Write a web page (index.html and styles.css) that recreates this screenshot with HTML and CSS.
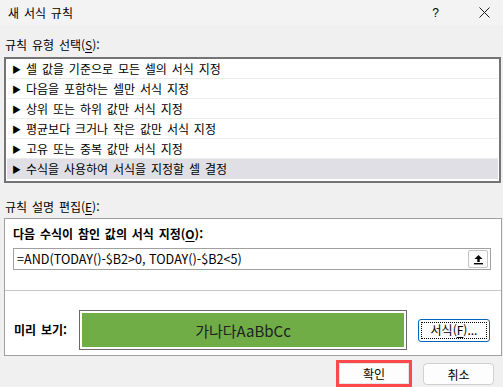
FILE: index.html
```html
<!DOCTYPE html>
<html lang="ko">

<head>
    <meta charset="UTF-8">
    <meta name="viewport" content="width=device-width, initial-scale=1.0">
    <title>새 서식 규칙</title>
    <link rel="stylesheet" href="styles.css">
</head>

<body>

    <div class="dialog">
        <div class="titlebar">
            <span class="title">새 서식 규칙</span>
            <span class="help">?</span>
            <span class="close">
                <svg width="11" height="11" viewBox="0 0 11 11">
                    <path d="M0.5 0.5 L10.5 10.5 M10.5 0.5 L0.5 10.5" stroke="#1a1a1a" stroke-width="1" fill="none" />
                </svg>
            </span>
        </div>

        <div class="section_label label_type">규칙 유형 선택(<u>S</u>):</div>
        <ul class="rule_list">
            <li><span class="arrow">▶</span>셀 값을 기준으로 모든 셀의 서식 지정</li>
            <li><span class="arrow">▶</span>다음을 포함하는 셀만 서식 지정</li>
            <li><span class="arrow">▶</span>상위 또는 하위 값만 서식 지정</li>
            <li><span class="arrow">▶</span>평균보다 크거나 작은 값만 서식 지정</li>
            <li><span class="arrow">▶</span>고유 또는 중복 값만 서식 지정</li>
            <li class="selected"><span class="arrow">▶</span>수식을 사용하여 서식을 지정할 셀 결정</li>
        </ul>

        <div class="section_label label_edit">규칙 설명 편집(<u>E</u>):</div>
        <div class="panel">
            <div class="panel_top">
                <div class="bold_label">다음 수식이 참인 값의 서식 지정(<u>O</u>):</div>
                <div class="formula">
                    <span class="formula_text">=AND(TODAY()-$B2&gt;0, TODAY()-$B2&lt;5)</span>
                    <span class="ref_btn">
                        <svg width="11" height="11" viewBox="0 0 11 11">
                            <path d="M5.5 1 L1.5 5 H4.3 V8 H6.7 V5 H9.5 Z" fill="#000" />
                            <rect x="1" y="9" width="9" height="1.4" fill="#000" />
                        </svg>
                    </span>
                </div>
            </div>
            <div class="panel_bottom">
                <span class="bold_label preview_label">미리 보기:</span>
                <div class="preview">
                    <div class="preview_fill">가나다AaBbCc</div>
                </div>
                <div class="format_btn"><span class="focus_ring">서식(<u>F</u>)...</span></div>
            </div>
        </div>

        <div class="actions">
            <div class="btn btn_ok">확인</div>
            <div class="btn">취소</div>
        </div>
    </div>

</body>

</html>
```

FILE: styles.css
```css
body {
    margin: 0;
    background-color: #f0f0f0;
    font-family: "Noto Sans CJK KR", "Noto Sans", sans-serif;
    font-size: 12px;
    color: #000;
    word-spacing: 1.5px;
}

.dialog {
    width: 503px;
    height: 387px;
    overflow: hidden;
}

u {
    text-decoration-thickness: 1px;
    text-underline-offset: 2px;
}

.titlebar {
    height: 25px;
    display: flex;
    align-items: center;
    background-color: #f3f3f3;
    padding-left: 8px;
}

.title {
    flex: 1;
    line-height: 16px;
}

.help {
    font-family: "Liberation Sans", sans-serif;
    font-size: 12px;
    margin-right: 40px;
}

.close {
    display: flex;
    margin-right: 13px;
}

.section_label {
    line-height: 16px;
    padding-left: 5px;
}

.label_type {
    margin-top: 12px;
    margin-bottom: 4px;
}

.label_edit {
    margin-top: 16px;
    margin-bottom: 3px;
}

.rule_list {
    list-style: none;
    margin: 0 2px 0 4px;
    padding: 0 1px 2px 1px;
    border: 2px solid #747474;
    background-color: #fff;
}

.rule_list li {
    height: 19px;
    line-height: 19px;
    border-bottom: 1px solid #ececec;
    padding-left: 5px;
    white-space: nowrap;
}

.rule_list li.selected {
    background-color: #dfdfe5;
    border-bottom-color: #dfdfe5;
}

.arrow {
    font-size: 9px;
    margin-right: 5px;
    vertical-align: 1px;
}

.panel {
    margin: 0 1px 0 4px;
    border: 1px solid #a0a0a0;
    background-color: #fff;
}

.panel_top {
    padding: 7px 10px 20px 8px;
    border-bottom: 1px solid #c8c8c8;
}

.bold_label {
    font-weight: bold;
    line-height: 16px;
}

.formula {
    margin-top: 6px;
    height: 20px;
    border: 1px solid #a0a0a0;
    display: flex;
    align-items: center;
    padding-left: 3px;
    padding-right: 2px;
}

.formula_text {
    flex: 1;
    font-size: 12.6px;
    line-height: 18px;
    word-spacing: 0;
}

.ref_btn {
    width: 18px;
    height: 16px;
    border: 1px solid #c4c4c4;
    border-radius: 2px;
    background-color: #fbfbfb;
    display: flex;
    align-items: center;
    justify-content: center;
}

.panel_bottom {
    display: flex;
    align-items: center;
    padding: 19px 0 5px 9px;
}

.preview_label {
    width: 65px;
}

.preview {
    border: 1px solid #6a6a6a;
    padding: 2px;
    box-sizing: border-box;
    height: 40px;
    width: 328px;
}

.preview_fill {
    height: 100%;
    background-color: #70ad47;
    display: flex;
    align-items: center;
    justify-content: center;
    font-size: 15px;
    color: #1e1e1e;
    word-spacing: 0;
}

.format_btn {
    margin-left: 11px;
    width: 72px;
    height: 23px;
    box-sizing: border-box;
    border: 1px solid #0067c0;
    border-radius: 3px;
    background-color: #fdfdfd;
    padding: 2px;
    display: flex;
}

.focus_ring {
    flex: 1;
    border: 1px dotted #000;
    display: flex;
    align-items: center;
    justify-content: center;
    line-height: 14px;
}

.actions {
    display: flex;
    justify-content: flex-end;
    gap: 14px;
    padding: 7px 9px 0 0;
}

.btn {
    width: 71px;
    height: 22px;
    box-sizing: border-box;
    border: 1px solid #d0d0d0;
    border-radius: 4px;
    background-color: #fdfdfd;
    display: flex;
    align-items: center;
    justify-content: center;
}

.btn_ok {
    width: 70px;
    height: 21px;
    border-color: #e6e6e6;
    border-radius: 0;
    outline: 3px solid #fc4a4a;
}
```
